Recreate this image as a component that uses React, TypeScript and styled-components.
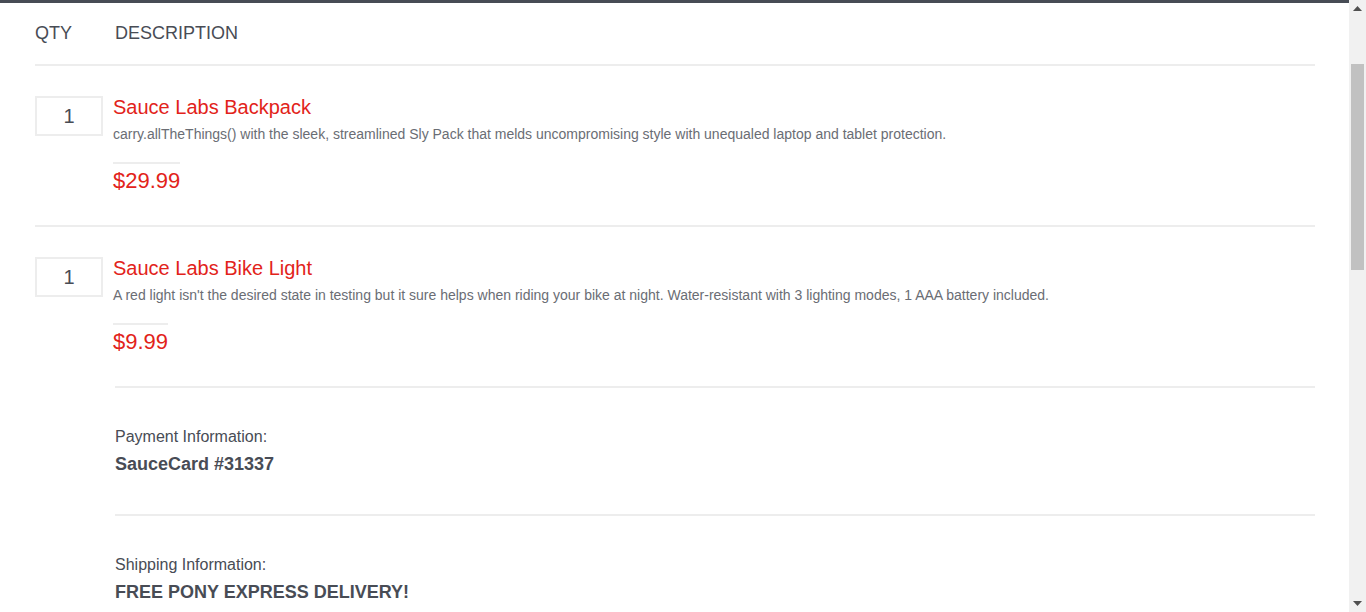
import React, { useLayoutEffect, useRef, useState } from "react";
import styled, { createGlobalStyle } from "styled-components";

const Global = createGlobalStyle`
  html, body {
    margin: 0;
    padding: 0;
    height: 100%;
    overflow: hidden;
    background: #ffffff;
  }
  body {
    font-family: "Liberation Sans", Arial, Helvetica, sans-serif;
    color: #484c55;
  }
  * { box-sizing: border-box; }
`;

const Frame = styled.div`
  display: flex;
  height: 100vh;
`;

const Viewport = styled.div`
  flex: 1;
  min-width: 0;
  height: 100%;
  overflow-y: scroll;
  overflow-x: hidden;
  scrollbar-width: none;
  &::-webkit-scrollbar {
    display: none;
  }
`;

const Page = styled.div`
  min-height: 1717px;
  display: flex;
  flex-direction: column;
`;

const HeaderArea = styled.header`
  height: 143px;
  flex-shrink: 0;
  border-bottom: 3px solid #474c55;
`;

const Content = styled.main`
  padding: 0 34px 0 35px;
  display: flex;
  flex-direction: column;
`;

const ListHeader = styled.div`
  display: flex;
  padding: 20px 0 21px;
  border-bottom: 2px solid #ededed;
  font-size: 18px;
  line-height: 20px;
  color: #484c55;
  text-transform: uppercase;
`;

const QtyLabel = styled.div`
  width: 80px;
`;

const DescLabel = styled.div``;

const Item = styled.div<{ $last?: boolean }>`
  display: flex;
  align-items: flex-start;
  padding: 30px 0 32px;
  border-bottom: ${(p) => (p.$last ? "none" : "2px solid #ededed")};
`;

const QtyBox = styled.div`
  width: 68px;
  height: 40px;
  margin-right: 10px;
  border: 2px solid #ededed;
  display: flex;
  align-items: center;
  justify-content: center;
  font-size: 20px;
  color: #484c55;
`;

const ItemBody = styled.div`
  display: flex;
  flex-direction: column;
  align-items: flex-start;
`;

const ItemName = styled.div`
  font-size: 20px;
  line-height: 23px;
  color: #e2231a;
`;

const ItemDesc = styled.div`
  margin-top: 7px;
  font-size: 14px;
  line-height: 16px;
  color: #6a6d74;
`;

const ItemPrice = styled.div`
  margin-top: 20px;
  padding-top: 4px;
  border-top: 2px solid #ededed;
  font-size: 22px;
  line-height: 25px;
  color: #e2231a;
`;

const Summary = styled.section`
  margin-left: 80px;
  display: flex;
  flex-direction: column;
`;

const SummaryBlock = styled.div`
  border-top: 2px solid #ededed;
  padding: 40px 0 39px;
  display: flex;
  flex-direction: column;
`;

const SummaryLabel = styled.div`
  font-size: 16px;
  line-height: 18px;
  color: #484c55;
`;

const SummaryValue = styled.div`
  margin-top: 8px;
  font-size: 18px;
  line-height: 21px;
  font-weight: 700;
  color: #484c55;
`;

const Scrollbar = styled.div`
  width: 17px;
  flex-shrink: 0;
  height: 100%;
  background: #f1f1f1;
  display: flex;
  flex-direction: column;
`;

const ArrowButton = styled.div`
  height: 17px;
  flex-shrink: 0;
  display: flex;
  align-items: center;
  justify-content: center;
`;

const ThumbTrack = styled.div`
  flex: 1;
  position: relative;
`;

const Thumb = styled.div`
  position: absolute;
  left: 2px;
  right: 2px;
  background: #c1c1c1;
`;

const Arrow = ({ down }: { down?: boolean }) => (
  <svg width="9" height="5" viewBox="0 0 9 5">
    <path d={down ? "M0 0 H9 L4.5 5 Z" : "M0 5 H9 L4.5 0 Z"} fill="#505050" />
  </svg>
);

const items = [
  {
    name: "Sauce Labs Backpack",
    desc: "carry.allTheThings() with the sleek, streamlined Sly Pack that melds uncompromising style with unequaled laptop and tablet protection.",
    price: "$29.99",
  },
  {
    name: "Sauce Labs Bike Light",
    desc: "A red light isn't the desired state in testing but it sure helps when riding your bike at night. Water-resistant with 3 lighting modes, 1 AAA battery included.",
    price: "$9.99",
  },
];

export default function App() {
  const ref = useRef<HTMLDivElement>(null);
  const [thumb, setThumb] = useState({ top: 47, height: 206 });

  useLayoutEffect(() => {
    const el = ref.current;
    if (!el) return;
    el.scrollTop = 140;
    const update = () => {
      const track = el.clientHeight - 34;
      const h = (track * el.clientHeight) / el.scrollHeight;
      const t = (track * el.scrollTop) / el.scrollHeight;
      setThumb({ top: t, height: h });
    };
    update();
    el.addEventListener("scroll", update);
    return () => el.removeEventListener("scroll", update);
  }, []);

  return (
    <>
      <Global />
      <Frame>
        <Viewport ref={ref}>
          <Page>
            <HeaderArea />
            <Content>
              <ListHeader>
                <QtyLabel>QTY</QtyLabel>
                <DescLabel>DESCRIPTION</DescLabel>
              </ListHeader>
              {items.map((it, i) => (
                <Item key={it.name} $last={i === items.length - 1}>
                  <QtyBox>1</QtyBox>
                  <ItemBody>
                    <ItemName>{it.name}</ItemName>
                    <ItemDesc>{it.desc}</ItemDesc>
                    <ItemPrice>{it.price}</ItemPrice>
                  </ItemBody>
                </Item>
              ))}
              <Summary>
                <SummaryBlock>
                  <SummaryLabel>Payment Information:</SummaryLabel>
                  <SummaryValue>SauceCard #31337</SummaryValue>
                </SummaryBlock>
                <SummaryBlock>
                  <SummaryLabel>Shipping Information:</SummaryLabel>
                  <SummaryValue>FREE PONY EXPRESS DELIVERY!</SummaryValue>
                </SummaryBlock>
              </Summary>
            </Content>
          </Page>
        </Viewport>
        <Scrollbar>
          <ArrowButton>
            <Arrow />
          </ArrowButton>
          <ThumbTrack>
            <Thumb style={{ top: thumb.top, height: thumb.height }} />
          </ThumbTrack>
          <ArrowButton>
            <Arrow down />
          </ArrowButton>
        </Scrollbar>
      </Frame>
    </>
  );
}
